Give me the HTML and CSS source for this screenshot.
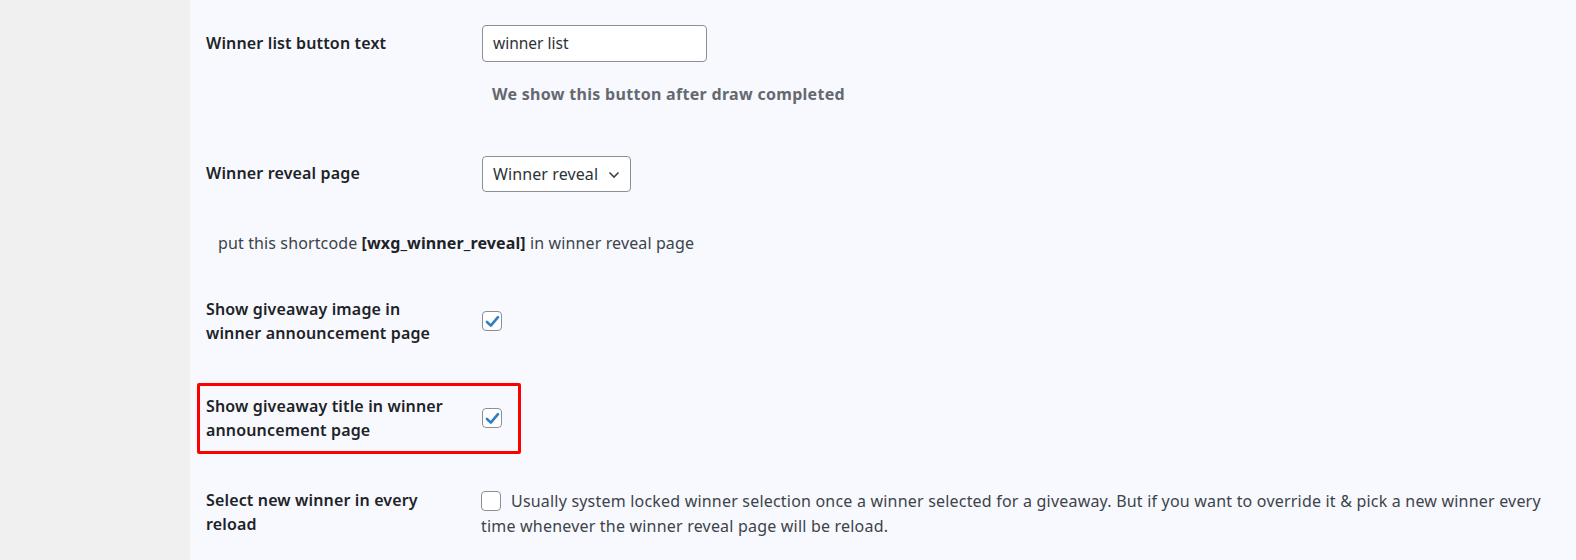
FILE: index.html
```html
<!DOCTYPE html>
<html>
<head>
<meta charset="utf-8">
<link rel="stylesheet" href="styles.css">
</head>
<body>
<div class="layout">
  <aside class="sidebar"></aside>
  <main class="content">
    <div class="row row-first">
      <div class="label">Winner list button text</div>
      <div class="field">
        <div class="text-input">winner list</div>
      </div>
    </div>
    <div class="hint-bold">We show this button after draw completed</div>

    <div class="row row-select">
      <div class="label">Winner reveal page</div>
      <div class="field">
        <div class="select"><span class="select-text">Winner reveal</span>
          <svg class="chev" width="12" height="8" viewBox="0 0 12 8"><path d="M1.5 1.5 L6 6 L10.5 1.5" fill="none" stroke="#3c434a" stroke-width="1.6"/></svg>
        </div>
      </div>
    </div>
    <div class="shortcode">put this shortcode <b>[wxg_winner_reveal]</b> in winner reveal page</div>

    <div class="row row-check">
      <div class="label label-2">Show giveaway image in<br>winner announcement page</div>
      <div class="field field-center">
        <span class="checkbox"><svg width="15" height="13" viewBox="0 0 15 13"><path d="M2 7 L5.8 10.6 L13 2.2" fill="none" stroke="#2f7fc4" stroke-width="2.6" stroke-linecap="round" stroke-linejoin="round"/></svg></span>
      </div>
    </div>

    <div class="row row-check row-marked">
      <div class="label label-2">Show giveaway title in winner<br>announcement page</div>
      <div class="field field-center">
        <span class="checkbox"><svg width="15" height="13" viewBox="0 0 15 13"><path d="M2 7 L5.8 10.6 L13 2.2" fill="none" stroke="#2f7fc4" stroke-width="2.6" stroke-linecap="round" stroke-linejoin="round"/></svg></span>
      </div>
    </div>

    <div class="row row-last">
      <div class="label label-2">Select new winner in every<br>reload</div>
      <p class="desc"><span class="checkbox empty"></span>Usually system locked winner selection once a winner selected for a giveaway. But if you want to override it &amp; pick a new winner every time whenever the winner reveal page will be reload.</p>
    </div>
  </main>
</div>
</body>
</html>
```
FILE: styles.css
```css
html, body {
  margin: 0;
  padding: 0;
}
body {
  background: #f8f9fe;
  font-family: "Noto Sans", "Open Sans", sans-serif;
  color: #1d2327;
  font-size: 16px;
}
.layout {
  display: flex;
  min-height: 560px;
}
.sidebar {
  width: 190px;
  flex: 0 0 190px;
  background: #f0f0f1;
}
.content {
  flex: 1;
  padding-left: 16px;
  padding-right: 16px;
}
.row {
  display: flex;
  align-items: center;
}
.label {
  width: 276px;
  flex: 0 0 276px;
  font-weight: 600;
  font-size: 16px;
  line-height: 23.5px;
  letter-spacing: 0.15px;
}
.row-first {
  padding-top: 25px;
}
.text-input {
  box-sizing: border-box;
  width: 225px;
  height: 37px;
  background: #fff;
  border: 1px solid #8c8f94;
  border-radius: 4px;
  padding: 0 10px;
  line-height: 35px;
  font-size: 15.5px;
  color: #2c3338;
}
.hint-bold {
  margin: 21px 0 0 286px;
  font-weight: 700;
  color: #646970;
  font-size: 16px;
  line-height: 23px;
  letter-spacing: 0.3px;
}
.row-select {
  margin-top: 50px;
}
.select {
  box-sizing: border-box;
  display: flex;
  align-items: center;
  justify-content: space-between;
  height: 36px;
  width: 149px;
  padding: 0 10px 0 10px;
  background: #fff;
  border: 1px solid #8c8f94;
  border-radius: 4px;
  font-size: 16px;
  color: #2c3338;
  white-space: nowrap;
}
.select-text {
  letter-spacing: 0.1px;
}
.chev {
  margin-top: 1px;
  flex: 0 0 12px;
}
.shortcode {
  margin: 40px 0 0 12px;
  color: #3c434a;
  line-height: 23px;
  font-size: 16px;
  letter-spacing: 0.12px;
}
.shortcode b {
  font-weight: 700;
  color: #1d2327;
}
.row-check {
  margin-top: 43px;
}
.checkbox {
  box-sizing: border-box;
  width: 20px;
  height: 20px;
  border: 1px solid #8c8f94;
  border-radius: 4px;
  background: #fff;
  display: inline-flex;
  align-items: center;
  justify-content: center;
}
.row-marked {
  margin-top: 38px;
  margin-left: -9px;
  width: 324px;
  box-sizing: border-box;
  border: 3px solid #ff0000;
  border-radius: 2px;
  padding: 9px 0 9px 6px;
}
.row-last {
  margin-top: 35px;
  align-items: flex-start;
}
.desc {
  margin: 0 0 0 -1px;
  width: 1068px;
  color: #3c434a;
  font-size: 16px;
  line-height: 25px;
  letter-spacing: 0.2px;
}
.checkbox.empty {
  display: inline-block;
  vertical-align: -4px;
  margin-right: 10px;
}
```
